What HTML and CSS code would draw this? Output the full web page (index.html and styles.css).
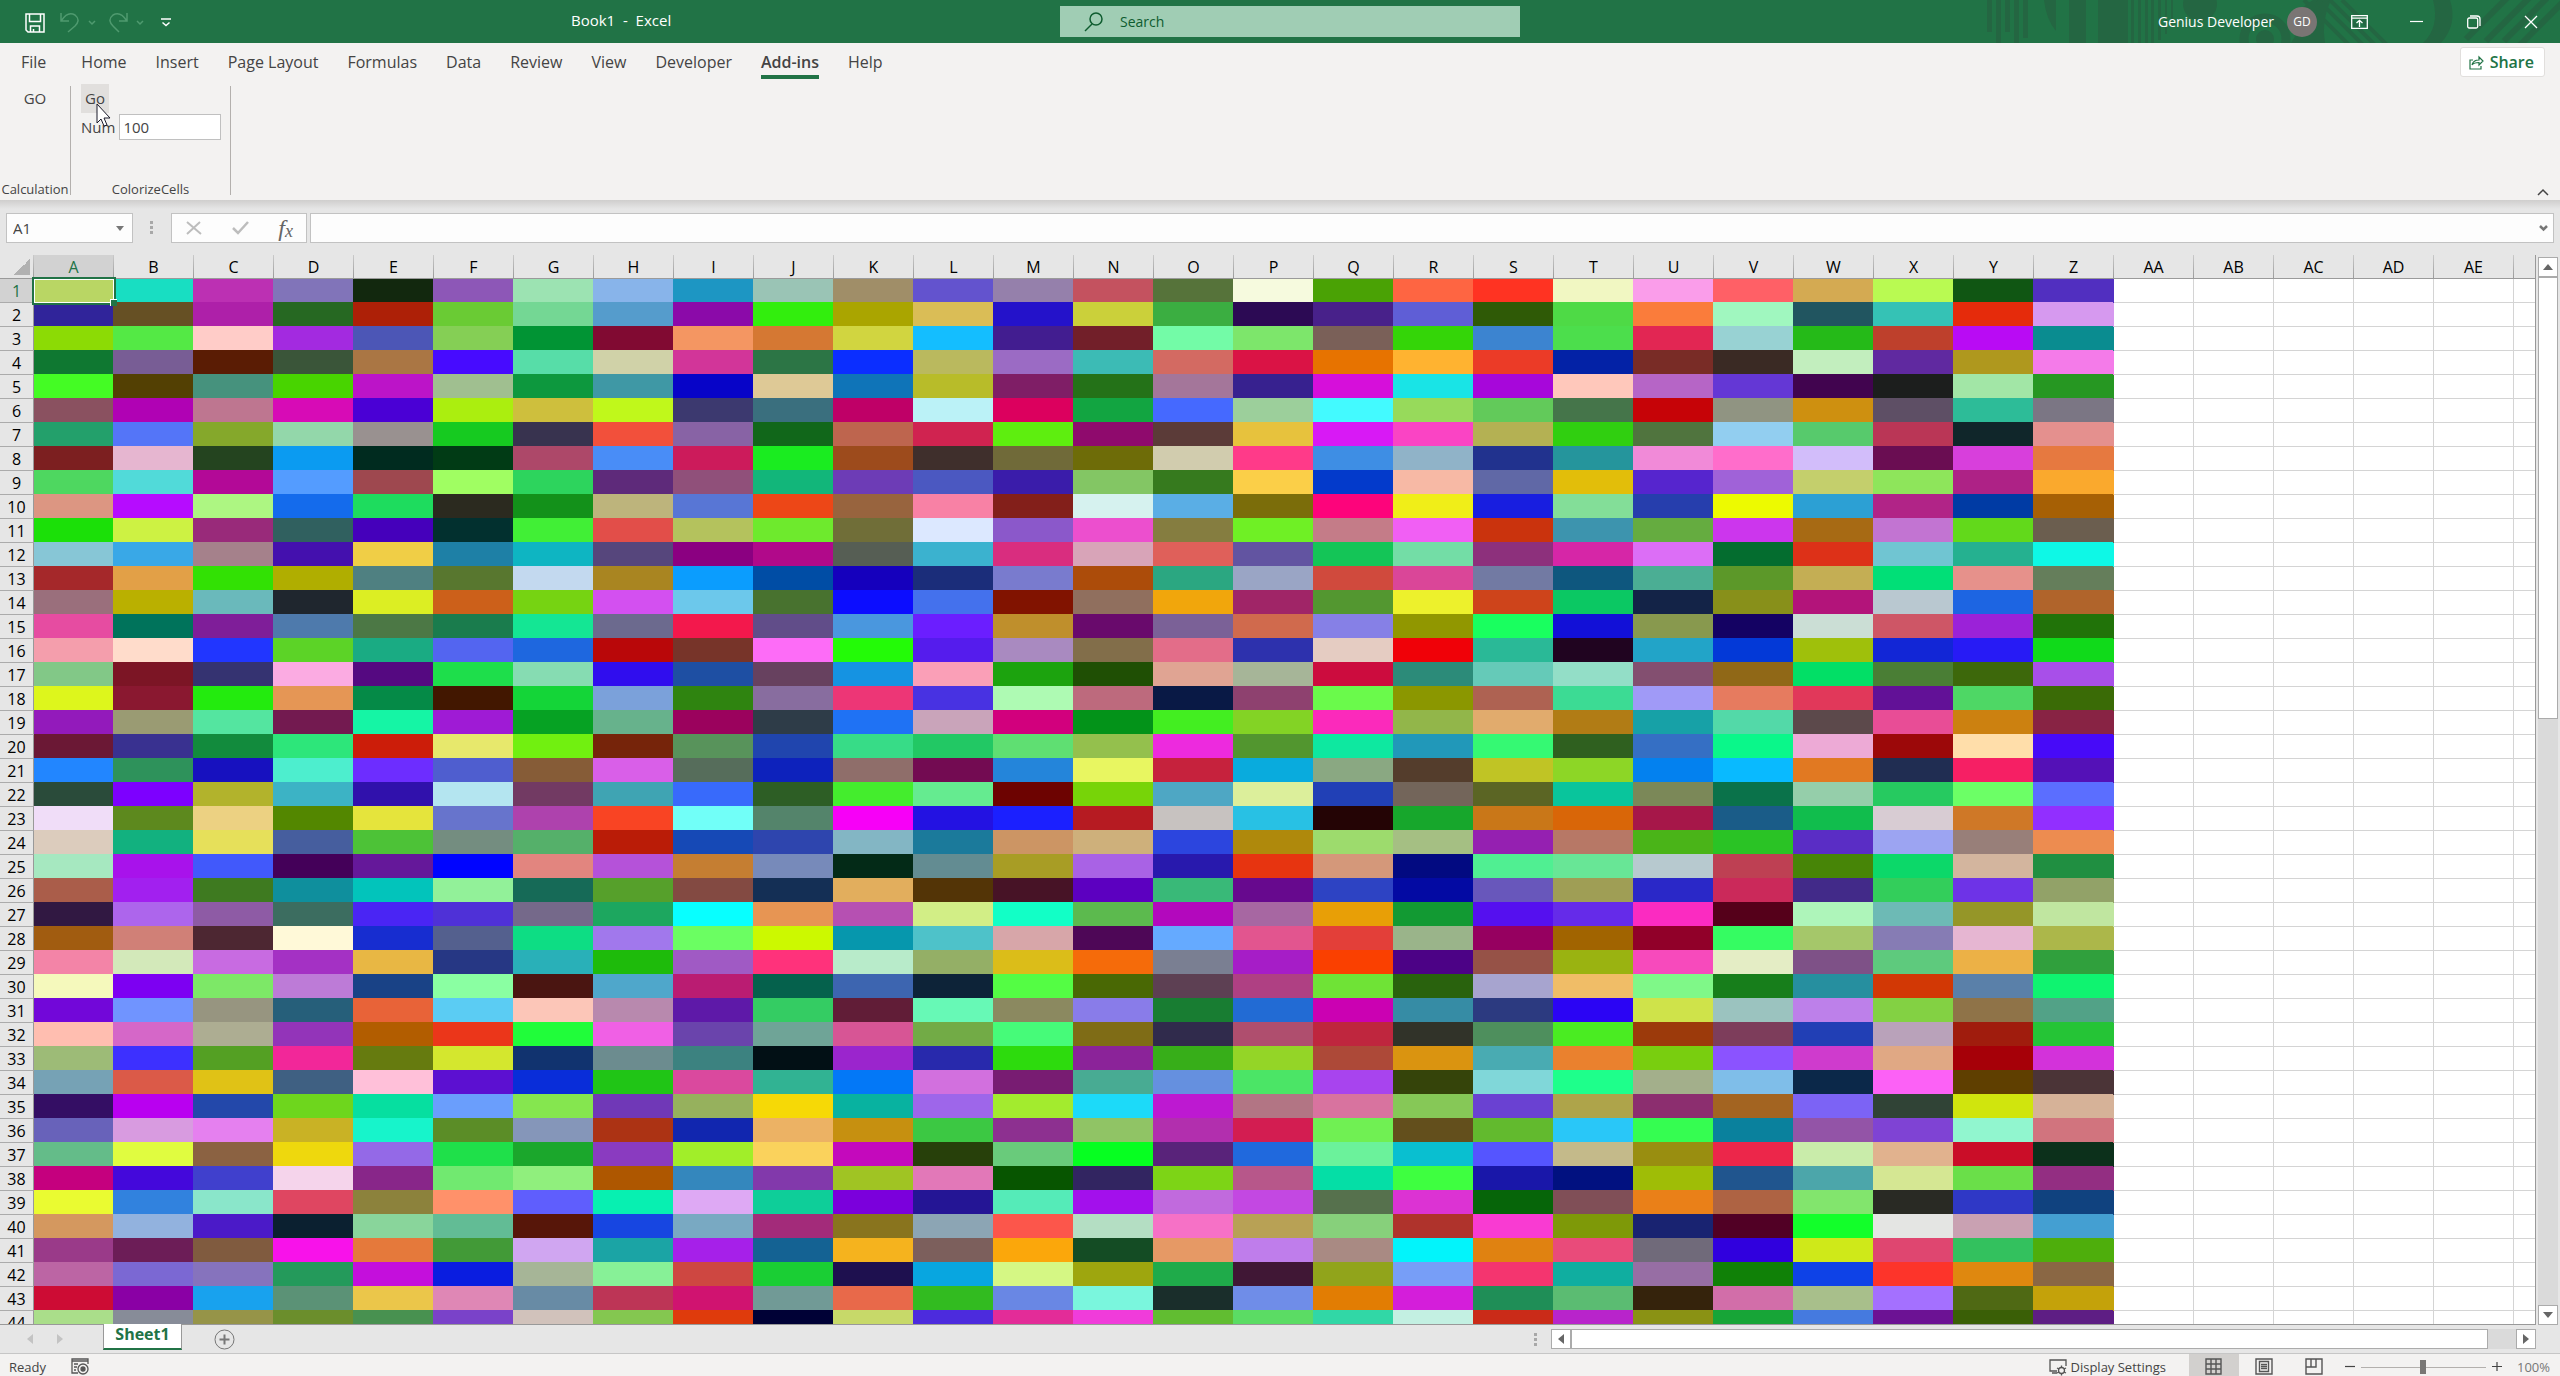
FILE: index.html
```
<!DOCTYPE html>
<html lang="en">
<head>
<meta charset="utf-8">
<title>Book1 - Excel</title>
<link rel="stylesheet" href="styles.css">
</head>
<body>
<header class="titlebar">
  <svg class="titlebar-art" width="573" height="43" viewBox="1987 0 573 43" aria-hidden="true">
    <path d="M1987 0h5v32h-5zM1996 0h5v43h-5zM2005 0h5v32h-5zM2014 0h5v43h-5zM2023 0h5v38h-5zM2044 0h12v31q-10-12-12-31zM2069 0h17v43h-17zM2098 0h30v43h-30zM2131 0h3v43h-3zM2138 0h3v43h-3zM2145 0h3v43h-3zM2151 0h3v43h-3zM2158 0h3v40h-3zM2165 0h2v34h-2zM2171 0h2v26h-2z"/>
    <circle cx="2200" cy="4" r="17"/>
    <circle cx="2265" cy="39" r="21" class="art-ring"/>
    <circle cx="2265" cy="39" r="9"/>
    <path d="M2291 43q10-14 6-25q4-12 16-18h18q-10 20-6 43z"/>
    <path class="art-line" d="M2318 0l46 46M2330 0l46 46M2342 0l46 46M2304 0l46 46"/>
    <path d="M2433 0h17q8 24-9 43h-18q17-16 10-43z"/>
    <path class="art-band" d="M2466 39l42-42M2486 41l44-44M2504 41l44-44M2520 45l50-50"/>
  </svg>
  <div class="title-left">
    <div class="quick">
      <button class="plain" aria-label="Save"><svg width="20" height="20" viewBox="0 0 20 20" fill="none" stroke="#fff" stroke-width="1.5"><path d="M1 1h18v18H3l-2-2zM4.500 1v7.500h11V1M5.500 19v-6h9v6M8.500 16v3"/></svg></button>
      <button class="plain dim undo" aria-label="Undo"><svg width="20" height="21" viewBox="0 0 20 21" fill="none" stroke="currentColor" stroke-width="1.500"><path d="M1 1v8h8M1.500 8.500C5 3 10 0 15 3c5 4 3 8 0 11l-7 6"/></svg></button>
      <button class="plain dim" aria-label="Undo list"><svg width="8" height="6" viewBox="0 0 8 6" fill="none" stroke="currentColor" stroke-width="1.500"><path d="M1 1l3 3 3-3"/></svg></button>
      <button class="plain dim redo" aria-label="Redo"><svg width="20" height="21" viewBox="0 0 20 21" fill="none" stroke="currentColor" stroke-width="1.500"><path d="M19 1v8h-8M18.500 8.500C15 3 10 0 5 3c-5 4-3 8 0 11l6 6"/></svg></button>
      <button class="plain dim" aria-label="Redo list"><svg width="8" height="6" viewBox="0 0 8 6" fill="none" stroke="currentColor" stroke-width="1.500"><path d="M1 1l3 3 3-3"/></svg></button>
      <button class="plain customize" aria-label="Customize Quick Access Toolbar"><svg width="10" height="9" viewBox="0 0 10 9" fill="none" stroke="#fff" stroke-width="1.500"><path d="M0 1h10M1.500 4.500L5 7.500l3.500-3"/></svg></button>
    </div>
    <div class="doc-title">Book1&nbsp; -&nbsp; Excel</div>
  </div>
  <label class="search">
    <svg width="20" height="20" viewBox="0 0 20 20" fill="none" stroke="#0e5c2f" stroke-width="1.500"><circle cx="12" cy="7" r="6"/><path d="M8 12l-7 7"/></svg>
    <input type="text" placeholder="Search" aria-label="Search">
  </label>
  <div class="account">
    <span>Genius Developer</span>
    <span class="avatar">GD</span>
    <button class="plain win" aria-label="Ribbon display options"><svg width="17" height="14" viewBox="0 0 17 14" fill="none" stroke="#fff" stroke-width="1.300"><path d="M.7.700h15.600v12.600H.7zM.7 3.200h15.600M8.500 12V5.500M5.500 8l3-2.700 3 2.700"/></svg></button>
    <button class="plain win" aria-label="Minimize"><svg width="13" height="14" viewBox="0 0 13 14" stroke="#fff" stroke-width="1.200"><path d="M0 6.500h13"/></svg></button>
    <button class="plain win" aria-label="Restore"><svg width="14" height="14" viewBox="0 0 14 14" fill="none" stroke="#fff" stroke-width="1.300"><rect x=".7" y="3" width="10" height="10" rx="1.500"/><path d="M3 1h7q3 0 3 3v7"/></svg></button>
    <button class="plain win" aria-label="Close"><svg width="14" height="14" viewBox="0 0 14 14" stroke="#fff" stroke-width="1.300"><path d="M1 1l12 12M13 1L1 13"/></svg></button>
  </div>
</header>

<section class="ribbon">
  <nav class="tabs">
    <button class="tab file">File</button>
    <button class="tab">Home</button>
    <button class="tab">Insert</button>
    <button class="tab">Page Layout</button>
    <button class="tab">Formulas</button>
    <button class="tab">Data</button>
    <button class="tab">Review</button>
    <button class="tab">View</button>
    <button class="tab">Developer</button>
    <button class="tab active">Add-ins</button>
    <button class="tab">Help</button>
    <button class="share"><svg width="15" height="15" viewBox="0 0 15 15" fill="none" stroke="#217346" stroke-width="1.200"><path d="M4 5H1v9h11v-3M3 10c1-4 4-5 7-5V2l4 4-4 4V7.500c-3 0-5 0-7 2.500"/></svg>Share</button>
  </nav>
  <div class="groups">
    <div class="group">
      <button class="cmd">GO</button>
      <div class="group-name">Calculation</div>
    </div>
    <div class="group colorize">
      <button class="cmd hover">Go
        <svg class="cursor" width="16" height="24" viewBox="0 0 16 24" aria-hidden="true"><path d="M1 1v19l4-4 3 7 3-1-3-7h6z" fill="#fff" stroke="#1a1a2a"/></svg>
      </button>
      <label class="field">Num <input type="text" value="100"></label>
      <div class="group-name">ColorizeCells</div>
    </div>
    <button class="plain collapse" aria-label="Collapse the ribbon"><svg width="12" height="8" viewBox="0 0 12 8" fill="none" stroke="#444" stroke-width="1.500"><path d="M1 7l5-5 5 5"/></svg></button>
  </div>
</section>

<section class="formula-bar">
  <div class="box name-box">
    <input type="text" value="A1" aria-label="Name box">
    <button class="plain" aria-label="Names"><svg width="8" height="5" viewBox="0 0 8 5"><path d="M0 0h8L4 5z" fill="#777"/></svg></button>
  </div>
  <svg class="grip" width="4" height="14" viewBox="0 0 4 14" fill="#a8a8a8"><path d="M0 0h3v3H0zM0 5h3v3H0zM0 10h3v3H0z"/></svg>
  <div class="box fx-box">
    <button class="plain" aria-label="Cancel"><svg width="16" height="14" viewBox="0 0 16 14" fill="none" stroke="#bdbdbd" stroke-width="2"><path d="M1 1l14 12M14 1L1 13"/></svg></button>
    <button class="plain" aria-label="Enter"><svg width="17" height="14" viewBox="0 0 17 14" fill="none" stroke="#bdbdbd" stroke-width="2.500"><path d="M1 7l5 5L16 1"/></svg></button>
    <button class="plain fx" aria-label="Insert function"><i>f</i><i class="fx-x">x</i></button>
  </div>
  <div class="box formula">
    <input type="text" aria-label="Formula">
    <button class="plain" aria-label="Expand formula bar"><svg width="9" height="7" viewBox="0 0 9 7" fill="none" stroke="#777" stroke-width="2.500"><path d="M1 1l3.500 3.500L8 1"/></svg></button>
  </div>
</section>

<main class="sheet">
  <div class="grid"><table class="cells" id="cells"></table></div>
  <div class="vscroll">
    <button class="arrow" aria-label="Scroll up"><svg width="10" height="6" viewBox="0 0 10 6"><path d="M5 0l5 6H0z" fill="#666"/></svg></button>
    <div class="vtrack"><div class="vthumb"></div></div>
    <button class="arrow" aria-label="Scroll down"><svg width="10" height="6" viewBox="0 0 10 6"><path d="M0 0h10L5 6z" fill="#666"/></svg></button>
  </div>
</main>

<section class="sheet-tabs">
  <button class="plain nav" aria-label="Previous sheet"><svg width="6" height="10" viewBox="0 0 6 10"><path d="M6 0v10L0 5z" fill="#c3c3c3"/></svg></button>
  <button class="plain nav" aria-label="Next sheet"><svg width="6" height="10" viewBox="0 0 6 10"><path d="M0 0v10l6-5z" fill="#c3c3c3"/></svg></button>
  <button class="sheet-tab">Sheet1</button>
  <button class="plain add" aria-label="New sheet"><svg width="21" height="21" viewBox="0 0 21 21" fill="none" stroke="#777"><circle cx="10.500" cy="10.500" r="9.500"/><path d="M10.500 5.500v10M5.500 10.500h10" stroke-width="2"/></svg></button>
  <svg class="grip tab-grip" width="4" height="14" viewBox="0 0 4 14" fill="#a8a8a8"><path d="M0 0h3v3H0zM0 5h3v3H0zM0 10h3v3H0z"/></svg>
  <div class="hscroll">
    <button class="arrow" aria-label="Scroll left"><svg width="6" height="10" viewBox="0 0 6 10"><path d="M6 0v10L0 5z" fill="#666"/></svg></button>
    <div class="htrack"><div class="hthumb"></div></div>
    <button class="arrow" aria-label="Scroll right"><svg width="6" height="10" viewBox="0 0 6 10"><path d="M0 0v10l6-5z" fill="#666"/></svg></button>
  </div>
</section>

<footer class="status">
  <span>Ready</span>
  <button class="plain macro" aria-label="Record macro"><svg width="18" height="17" viewBox="0 0 18 17" fill="none" stroke="#555" stroke-width="1.300"><path d="M7 15H1V1h16v5M1 3h16M3 6h4M3 9h3M3 12h2"/><circle cx="12" cy="11" r="5"/><circle cx="12" cy="11" r="2" fill="#555"/></svg></button>
  <button class="plain display"><svg width="18" height="17" viewBox="0 0 18 17" fill="none" stroke="#555" stroke-width="1.300"><path d="M8 12H1V1h16v6M3 14h5"/><circle cx="12.500" cy="11.500" r="3"/><path d="M12.500 6.500v2M12.500 14.500v2M8 9l2 1M15 13l2 1M8 14l2-1M15 10l2-1"/></svg>Display Settings</button>
  <button class="plain view on" aria-label="Normal"><svg width="17" height="17" viewBox="0 0 17 17" fill="none" stroke="#555" stroke-width="1.400"><path d="M1 1h15v15H1zM6 1v15M11 1v15M1 6h15M1 11h15"/></svg></button>
  <button class="plain view" aria-label="Page layout"><svg width="18" height="17" viewBox="0 0 18 17" fill="none" stroke="#555" stroke-width="1.400"><path d="M1 1h16v15H1zM4.500 3.500h9v10h-9zM6 6.500h6M6 8.500h6M6 10.500h6"/></svg></button>
  <button class="plain view" aria-label="Page break preview"><svg width="18" height="17" viewBox="0 0 18 17" fill="none" stroke="#555" stroke-width="1.400"><path d="M1 1h16v15H1zM6 1v8M1 9h10V1"/></svg></button>
  <button class="plain zoom-btn" aria-label="Zoom out"><svg width="10" height="10" viewBox="0 0 10 10" stroke="#444" stroke-width="1.200"><path d="M0 4.500h10"/></svg></button>
  <input class="zoom" type="range" min="0" max="100" value="50" aria-label="Zoom">
  <button class="plain zoom-btn" aria-label="Zoom in"><svg width="10" height="10" viewBox="0 0 10 10" stroke="#444" stroke-width="1.200"><path d="M0 4.500h10M5 0v9"/></svg></button>
  <button class="plain percent">100%</button>
</footer>
<script src="app.js"></script>
</body>
</html>
```
FILE: styles.css
```
* { box-sizing: border-box; }
html, body { height: 100%; }
body {
  margin: 0;
  display: flex;
  flex-direction: column;
  overflow: hidden;
  background: #e6e6e6;
  color: #444;
  font: 15px/20px "Open Sans", "Noto Sans", sans-serif;
}
button, input { font: inherit; color: inherit; margin: 0; }
input { border: 0; outline: 0; background: none; min-width: 0; padding: 0; }
.plain {
  display: flex;
  align-items: center;
  justify-content: center;
  border: 0;
  background: none;
  padding: 0;
}
svg { display: block; flex: none; }

/* Title bar */
.titlebar {
  position: relative;
  display: grid;
  grid-template-columns: 1fr 460px 1fr;
  align-items: center;
  height: 43px;
  flex: none;
  padding-left: 20px;
  background: #217346;
  color: #fff;
}
.titlebar-art { position: absolute; right: 0; top: 0; fill: #246642; }
.titlebar-art .art-ring { fill: none; stroke: #246642; stroke-width: 9; }
.titlebar-art .art-line { fill: none; stroke: #246642; stroke-width: 4; }
.titlebar-art .art-band { fill: none; stroke: #246642; stroke-width: 6; }
.title-left { display: flex; align-items: center; }
.quick { display: flex; align-items: center; width: 551px; padding: 2px 0 0 5px; }
.dim { color: #4f9a6f; }
.undo { margin: 0 8px 0 15px; }
.redo { margin: 0 8px 0 12px; }
.customize { margin-left: 17px; }
.doc-title { padding-bottom: 4px; white-space: nowrap; }
.search {
  display: flex;
  align-items: center;
  gap: 16px;
  height: 31px;
  padding-left: 24px;
  background: #a0cdb4;
  font-size: 14px;
}
.search input { flex: 1; }
.search input::placeholder { color: #0e5c2f; opacity: 1; }
.account {
  position: relative;
  display: flex;
  align-items: center;
  justify-content: flex-end;
  padding-right: 1px;
  font-size: 14px;
}
.avatar {
  width: 30px;
  height: 30px;
  margin: 0 14px 0 13px;
  border-radius: 50%;
  background: #7a7574;
  font-size: 12px;
  line-height: 30px;
  text-align: center;
}
.win { width: 57px; height: 40px; }

/* Ribbon */
.ribbon { flex: none; background: #f3f2f1; }
.tabs { display: flex; gap: 1px; padding: 0 15px 0 7px; height: 41px; }
.tab {
  position: relative;
  height: 38px;
  padding: 0 14px;
  border: 0;
  background: none;
  font-size: 16px;
  line-height: 38px;
}
.file { margin-right: 6px; }
.tab.active { font-weight: 600; }
.tab.active::after {
  content: "";
  position: absolute;
  left: 14px;
  right: 14px;
  bottom: 2px;
  height: 4px;
  background: #217346;
}
.share {
  display: flex;
  align-items: center;
  gap: 6px;
  height: 30px;
  margin: 4px 0 0 auto;
  padding: 0 10px 0 8px;
  border: 1px solid #e1dfdd;
  border-radius: 3px;
  background: #fff;
  color: #217346;
  font-size: 16px;
  font-weight: 600;
}
.groups { display: flex; height: 116px; }
.group {
  display: flex;
  flex-direction: column;
  align-items: center;
  width: 71px;
  height: 109px;
  margin-top: 2px;
  border-right: 1px solid #b3b0ad;
}
.colorize { width: 160px; align-items: flex-start; padding-left: 10px; }
.cmd {
  height: 29px;
  margin-top: -2px;
  padding: 0 4px;
  border: 0;
  background: none;
  line-height: 29px;
}
.cmd.hover { position: relative; background: #e1dfdd; }
.cursor { position: absolute; left: 15px; top: 19px; z-index: 2; }
.field { display: flex; align-items: center; gap: 4px; padding-top: 1px; }
.field input {
  width: 102px;
  height: 26px;
  padding: 0 3px;
  border: 1px solid #c0c0c0;
  background: #fff;
}
.group-name {
  align-self: center;
  margin-top: auto;
  font-size: 13px;
  line-height: 12px;
  white-space: nowrap;
}
.colorize .group-name { padding-right: 10px; }
.collapse { align-self: flex-end; margin: 0 11px 4px auto; }

/* Formula bar */
.formula-bar {
  display: flex;
  align-items: center;
  flex: none;
  height: 55px;
  padding: 13px 6px 12px;
  background: linear-gradient(#cfcecd, #e6e6e6 9px);
}
.box { display: flex; height: 30px; border: 1px solid #c2c2c2; background: #fdfdfd; }
.name-box { width: 127px; padding: 0 8px 0 6px; }
.name-box input { flex: 1; }
.grip { margin: 0 17px; }
.fx-box { width: 136px; margin-right: 3px; padding: 0 13px 0 14px; justify-content: space-between; }
.fx { font: 24px/28px "Liberation Serif", serif; color: #666; }
.fx-x { font-size: 18px; padding-top: 6px; }
.formula { flex: 1; padding: 0 5px; }
.formula input { flex: 1; }

/* Sheet */
.sheet { display: flex; flex: 1; min-height: 0; }
.grid {
  flex: 1;
  min-width: 0;
  overflow: hidden;
  border-right: 1px solid #999;
  border-bottom: 1px solid #999;
}
.cells {
  table-layout: fixed;
  width: 2594px;
  border-collapse: separate;
  border-spacing: 0;
  color: #000;
  font-size: 16px;
}
.cells th, .cells td { width: 80px; height: 24px; padding: 0; }
.cells th {
  position: sticky;
  background: #e6e6e6;
  font-weight: 400;
  line-height: 22px;
}
.cells thead th {
  top: 0;
  z-index: 2;
  border-bottom: 1px solid #999;
  border-right: 1px solid;
  border-image: linear-gradient(#ccc, #999) 1;
}
.cells tbody th {
  left: 0;
  z-index: 1;
  border-right: 1px solid #999;
  border-bottom: 1px solid #ababab;
}
.cells .corner { width: 34px; background: linear-gradient(135deg, #e6e6e6 50%, #b1b1b1 50%) 14px 4px / 16px 16px no-repeat #e6e6e6; }
.cells .current { background: #d2d2d2; color: #217346; }
.cells td { background: #fff; border-right: 1px solid #d4d4d4; border-bottom: 1px solid #d4d4d4; }
.cells td.fill { border: 0; background: var(--fill); box-shadow: -1px -1px 0 var(--fill); }
.cells td.selected { position: relative; z-index: 3; }
.selection {
  position: absolute;
  inset: -2px;
  border: 2px solid #217346;
  box-shadow: inset 0 0 0 1px #fff;
}
.selection::after {
  content: "";
  position: absolute;
  right: -3px;
  bottom: -3px;
  width: 6px;
  height: 6px;
  border: solid #fff;
  border-width: 1px 0 0 1px;
  background: #217346;
}
.arrow {
  display: flex;
  align-items: center;
  justify-content: center;
  width: 20px;
  height: 20px;
  padding: 0;
  border: 1px solid #ababab;
  background: #fff;
  flex: none;
}
.vscroll { display: flex; flex-direction: column; width: 24px; padding: 2px 2px 0; }
.vtrack { flex: 1; width: 20px; background: #dadada; }
.vthumb { height: 43%; border: 1px solid #ababab; background: #fff; }

/* Sheet tabs */
.sheet-tabs { display: flex; flex: none; height: 29px; padding-right: 24px; border-bottom: 1px solid #c6c6c6; }
.nav { width: 30px; }
.nav:first-child { margin-left: 15px; }
.sheet-tab {
  width: 79px;
  height: 26px;
  margin: -1px 32px 0 28px;
  padding: 0 0 4px;
  border: 1px solid #999;
  border-width: 0 1px 2px;
  border-bottom-color: #217346;
  background: #fff;
  color: #217346;
  font-weight: 700;
  font-size: 16px;
  line-height: 20px;
}
.tab-grip { margin: 8px 13px 0 auto; }
.hscroll { display: flex; width: 985px; max-width: 60%; padding-top: 4px; }
.htrack { flex: 1; height: 20px; background: #dadada; }
.hthumb { width: 97%; height: 20px; border: 1px solid #ababab; background: #fff; }

/* Status bar */
.status {
  display: flex;
  flex: none;
  height: 22px;
  padding: 0 10px 0 9px;
  background: #f3f2f1;
  font-size: 13px;
  line-height: 26px;
}
.macro { margin-left: 25px; padding-top: 3px; }
.display { margin: 0 23px 0 auto; gap: 3px; padding-top: 4px; white-space: nowrap; }
.view { width: 50px; padding-top: 3px; }
.view.on { background: #d2d0ce; }
.zoom-btn { width: 22px; padding-top: 4px; }
.zoom { width: 125px; height: 18px; margin-top: 4px; appearance: none; background: linear-gradient(#b3b0ad, #b3b0ad) 0 9px / 100% 1px no-repeat; }
.zoom::-webkit-slider-thumb { appearance: none; width: 6px; height: 14px; background: #797775; }
.percent { margin-left: 9px; padding-top: 4px; color: #777; }
```
FILE: app.js
```
// Fill colours of A1:Z44, one line per row.
const FILLS = `
b9d664 18dec2 bc30b3 8174b9 12280e 8d57b7 9ce3b2 88b4ea 1d96c3 9ac4b5 a08e68 6353ce 9580ab c4525f 56733a f6fade 4aa205 fe6542 ff3322 f1f7c2 fa9dea ff6066 d4aa52 b9fa52 105613 512fc0
30249a 665024 ae20a9 266822 ad2007 6acb34 74d794 559ccc 8b0aa9 32ee0d aaa500 dabd56 2412ca cbd03a 3bae41 2c0a54 48218a 5f5ed6 2f5a06 4eda46 fa7c3b a0f7bf 215560 35c2b5 e52b0b d699ef
8cdb05 54e945 ffccc8 a32ae0 4c56b6 85cf55 019434 810a32 f49662 d57833 d1d540 14beff 421d90 721f29 73fba7 7de66b 7a6058 34d508 3c84d0 4cde4c e22653 98d2d3 25ba18 be402c b90bf4 0a8c90
0f7831 785d95 5a1c04 3a5539 aa7644 470bff 57dda8 d0d2a8 d23599 2c7545 0b2eff bab95e 9b6bc4 3cbbb5 d36a62 da1345 e77300 ffb330 eb3b27 0322a6 792c26 3a2a24 c2eebe 6029a0 af981e f47be9
44fc24 534003 46927d 48d400 bc14c8 a0bf90 0d983e 3f98a5 0704c8 dec996 0f74b8 b8bc29 7f1e66 247218 a4769a 37218f d60fda 19e4e6 a707da ffc8bb b665c6 6437d5 41044f 1c1e1d a2e6a6 269722
8a5160 b002b4 be7690 d70bb6 4a00d5 abee0f cebf3d c0f81b 3c396f 3a6f7e bf0067 bbf2f7 dc005e 12a541 4569ff 9ccf9b 43faff 97da5b 62ca5a 45754a c60307 909482 ce9010 5e4f65 2dbc98 7b7684
23a06b 5475f8 85a82b 93d7aa 999190 16ca20 38334f f2503b 8863a5 11671a be654e d02350 5eee0f 8f0a6d 5b3b38 e7c23d d819f5 fa44c4 b4b153 30cf10 50743e 92cef0 57ca6c ba3656 10262a e4908e
7c1f20 e6b6d0 24441f 0b9bf1 002b1f 013b15 ad4869 498df7 cc1b5b 1aec20 9d4b1c 3f2f2c 706a39 6e6c08 d1ccae ff3a89 3e8ee4 90b3c8 21328e 25959c f18ad8 ff6dcb d2bdfa 6a0d52 d83fdc e67940
4ed760 51dad9 b30997 549cff 9e484f a0fe62 2dd45d 5e2a7a 90507a 12b67a 6d3cb6 4b58c1 3a1caa 83c664 367a1e fbcf48 033acb f7b9a5 6068a6 e2be0a 5625ce a062d8 c4cf6c 8ee55b ae2286 faa92d
dc9682 b60cff adf682 146bec 1edc5e 2b2a1f 13911a bdb47c 5876d5 ed4717 98643e f881a5 831f1a d6f2ef 5aaee5 7b6d0a fd047b f0ee18 181ee0 83de98 263ead edfa00 2ca0d4 b12487 003ba4 a66005
1be008 cdf243 992a7a 30605f 4500bb 02302f 41ef36 e24e49 b4c25d 6eea2d 706e38 dce8ff 8b58ca ec4fce 857d40 6ff025 c47c88 f15ff4 ca330d 3d94ae 65ac40 cc36ed a76a14 c274d2 62d91b 6b5e4f
87c6d6 39a8e7 a5818b 4410ae f0ce46 1e80a6 0eb5c2 56467c 8b0081 b1098a 565e54 3bb2cf d92d7f d8a4b8 df605a 6254a1 14c557 73dda6 8d307c d626a7 dc6ef6 046d2f dd3118 70c5d2 25b190 0ef8e6
a5282a e2a047 32e104 b0ae00 4f8081 58772f c3d9ef a98521 0b9dfe 004da5 1500bd 1b2d7a 797bce ac4c0a 2ba781 9aa5c5 d04a3d da4698 727aa3 0e577e 4bae94 5c9829 c4ae54 01df77 e6918b 657e5b
9a6f7c bab000 6ab9bb 1f262e dcee23 cc601a 76d312 d350f0 6cc8eb 48722f 0c0dff 4471ed 811300 906f5e f1a60c a02567 539730 edf12c ce441b 0bc863 132347 88901a b3147a b9c8d0 1d65e2 b0642b
e64ca1 00735b 7f1e99 4e7aac 4c7845 1a7c4d 14e694 6c6a8e f3184c 614d89 4a97de 6b1eff bf8f2c 690a6c 7b6197 d06a4d 8680e6 919700 19ff5f 1210d7 88994e 140263 cbded5 ce5666 9b22d8 217309
f49eac ffdccb 2136ff 5cd327 1aab83 5365f0 1e67df b90709 773429 fd6cf7 23fb07 551ced a98ac0 826e4a e36d89 2d31ad e5ccc2 f00108 2ab997 200420 22a4c8 0339d7 9fc00b 1226d6 271bf5 10da1a
82c887 7c1525 353371 fbabe2 550981 1ede4b 86dcb2 300dee 1e4fa3 67415f 1593e2 fa9fb7 1ca30e 1f4f04 e0a493 a6b598 cc0c3e 2c8b79 65cab8 93dec7 834f70 906817 02df66 4a7e35 3d680b a84fe9
ddf61c 8a1830 23eb0e e59655 058a47 421700 14d538 7ba1da 2f8410 886d9f ed3676 4832e2 aefab3 bd6a7d 091945 8e416f 6afa4b 8b9700 ae6252 3cdb94 a09af7 e67b5f e1385a 621197 4ed765 3a6b06
931abb 9a9b73 54e5a0 731a50 15f5a5 9f1bd5 06a223 67b28c 9b025d 2e3c48 1f72f4 c9a4ba d2007d 039319 43ee21 83d325 fb2abb 92b64a e1ab6d b17c15 17a1a7 53d9a8 5c494b e84d96 cc8110 882344
6b1835 393190 128b3d 2de67a cc1d09 e7e86c 71f010 76240a 58935b 2045ae 37dc87 22c864 5fdf72 94c04d ed2ade 52962f 0ee8a0 2198b9 35f973 2f601f 356fc4 0af78a edaad6 9c0809 ffdeaa 470af8
2286ff 2e925b 1711bf 4deece 6d2dff 4f5ecf 865c37 d95fe8 566d5b 0d22bc 8f6e6a 730b52 2485da e8f661 c6223d 09abdd 8aa882 543d2c c0c425 8dd626 0381ef 09baff e17922 202d52 f61f64 5411b7
2a4b3a 7d00ff b2b32c 3cb3c5 3011ac b4e5f0 723a63 3fa4b3 386afb 2d5e25 44ed2d 65eb90 6d0301 77d408 4ea7c4 dcef9b 2140b6 73655a 5b6524 09c59c 7b8858 0a724a 95ceaa 26ca60 6cff66 5b6eff
f0ddf8 5d891e ecd182 538700 e5e43c 6774cc ae42ad f94423 71fff8 54846b f700f7 2312e2 1b20ff b61b22 c7c2c0 28c1e4 240405 17a72c c97718 d96608 a61749 1a5c88 11bd4d d8ccd3 cf7827 922fff
dcccbd 12b17f e6e05a 465e9e 4dc237 748d80 55b06a ba1c07 1649b6 2e45ae 83b6c4 1b7a9b cc9564 ceb07b 2c45de af890c 9ddb6d a5bf83 9520b1 b77866 4ab418 2ac325 5a2dc5 9ca4f2 987f79 ed8c50
a6e8c0 a812eb 4159fb 440059 65189a 0004ff e2857f b552d9 c57e32 778aba 032a17 638c92 a89d25 a962e5 2819ad e73410 d4987a 020a81 50ef92 68e696 b7c9cf be4053 478507 0cd869 d3b59e 208f41
aa5d4a a220ef 3e7a20 0f8f9d 02c4bb 92f199 166a57 56a02b 834a42 142f55 e2ae5d 533406 471326 5c00c0 39b978 67098e 2d43c3 030aa3 6857bb 9f9e55 2a28c8 cb295a 422a89 33ce5b 6e33e7 92a268
311842 ad65ec 8e5ba5 3c6d60 4a25f4 4f31d7 75698a 1da75f 08ffff e79553 b650b2 d2ee86 12ffc6 5cba4e b308bd a767a2 e89f06 129a33 5510ef 652be9 fb2bc1 55001a aef5ba 6dbab5 959628 c0e6a0
a15c10 d08077 4d2732 fff9d8 172dd0 54608e 0ddd84 a178ec 6bfe62 ccf900 0697ad 4ec2c9 d7a6a9 4e0757 65aaff e2558f e33f39 9ab48a 960060 a16400 910029 35fc62 a5c76a 867cb4 e6b6d2 acb74a
f384a7 d3e9ba c86be1 a431c4 e8b744 263784 29b0b8 1ebb0b a05ac4 ff327b b8ebca 94af66 dbbd19 f56b0a 7a7f92 a61dc7 fa4000 4c0286 965247 9ab311 f74abc e4edc5 7e5187 5eca7d ecb146 30a03d
f5f9bc 7d00f2 7de867 bd7bd7 194286 8affa2 4a1511 4fa7cb ba1c72 05614c 3d65b0 0d2338 54fd44 496804 5d4053 af4083 6fe336 29620d a7a4cf f0bd67 7ff888 177e1b 268f9f d23805 5a80a9 0ff370
7207d9 7094ff 979580 265f7a e86338 5bccf3 fcc6b8 b889ae 5e19a8 34cc63 611d37 67f9b6 8b8960 897ce9 187d32 226bd4 cb01b2 368ca5 2c3a80 2b04f4 cfe34a 9bc3bf bd80ea 83d143 8f7348 52a287
ffbeb0 d567c8 adad92 9334b9 b25d00 eb361a 20fd3a f060e5 6a44ac 6fa497 d75595 72ab46 46fb79 7f6c16 302b4c af4e6e bf263e 313329 4e8f5d 4aec22 9c3a0b 7d3d5b 213fb5 b9a2ba a01c0d 25c436
9dbb77 3d30ff 54a023 f22799 667b0f d4e72e 11336f 6c8c8f 3c8280 021015 9b25cd 2829ac 2ddb0d 8b2399 37ae19 94d527 ad4938 da9410 49abb2 ea812e 79ce0f 8b53ff cf3bcd e0a884 a60008 d332da
76a2b5 db5a48 e0c216 3f6082 ffc0d9 5c10d1 092dd9 20c516 da499e 31b393 0378f7 d270de 781c72 48ab93 6590df 4be566 a844ee 35440a 80d7d9 1eff8b a3af8b 7fbee9 0b2849 fc61f6 5f3f00 4b3437
340e64 b900f0 2348aa 6ed61d 06dfa0 6a9efc 85e64f 7038b7 96b15d f6d906 08b2a0 9e66ea a3eb2e 1cdaf9 bd19d1 b27584 d8739f 86c857 6a41d2 aea44a 8c2e6f a36421 7c63f5 304336 d0e50d d6b298
6862ba d89be0 e580ef c9b225 17f4cb 5b8d27 8596b9 ac3314 1126af ecb264 c69010 3cc843 8d3090 90c465 b22fae d31d51 70f053 634f1c 62ba2e 29c7f8 35fd51 0a819d 9354a7 7f43d4 91f6cf d1747e
64bc89 e0fc40 8b6242 eed80d 9469e7 1fe04a 1ba72c 8a3bc0 a1ee29 fad25c c409bc 27400a 69cb7b 06ff21 59237a 2069dd 6bf29b 09bfd0 5555ff c4ba8a 998e10 ec264a c9ecaa e1b28e ca0d28 0c301b
c5007e 4408db 4040cd f5d4eb 882689 71e970 90ef7d ae5700 3487bd 8239ab a0c423 e278b8 075500 322561 7dd416 b7578a 05dea6 3eff40 1917a9 011180 9fbd06 20558e 4ca6aa d5e793 6adf49 932e82
eafb31 3182de 8ae6ca df4661 8c823c ff916a 5f5efd 07f0b1 dea9f4 0ece99 7b00dc 241595 55ebb8 a310ec c16add c348e2 56714d dc33d3 066509 804f57 ea8018 ae6343 82e56d 292a24 2f38c6 10427f
d4985f 92b2de 4b1ac8 0b2030 89d59b 62bc95 571609 1746e1 79a9c2 a32b7a 89741e 8ca5b4 fc564b b4dec3 f671c6 b8a155 87d07b af332c f93bd2 7e9908 192371 510025 12ff2a e4e5e3 c9a1b2 449fd2
9a3a89 6c1d57 805b3f f812ea e5793b 429a37 d0a6f1 1ba4a5 a620e9 146293 f5b31e 7c5f5c fba70b 144c24 e69965 bf7deb a98a83 02f4fb e08211 e94b7a 706a7a 3000de cfe919 df4670 33c15e 4eae0c
bc65a4 7b68d3 8673bd 249a5b c40fdc 0a1de0 a6b597 87f197 ce4741 1ace34 1e104f 08a6e0 d5f784 9ea60e 1fab4a 401735 91a41b 779ef7 f4356f 10aea0 976ea4 108107 0e42e7 fd342a df880f 8a6744
cd0c34 8a00a5 18a2ee 5b9276 ebc64a df87b5 688ba5 bd3556 d01370 719a96 e8694a 32bb20 6987e4 7af6dd 1a2e2b 6f8de8 e27d03 d41eda 1f8e57 5bbc72 35230c d26ea9 a8bf8b a470ff 4f6914 c4a20a
aade8a 878c98 969448 6b8e2c 489150 7a42c9 d1c2bb 84c750 df3b0c 000136 c7d969 4c2bdd e32c98 f03cda 61bd31 5bdc64 31d7a6 c3f0e2 ca2b18 b824cb 8a9214 17a537 457adf 6c1294 3a5f06 5e1e84
`.trim().split("\n").map(line => line.split(" "));

// A to AE are labelled; the last column only peeks in at the right edge.
const LABELLED = 31;
const COLUMNS = 32;

function columnName(index) {
  const letter = String.fromCharCode(65 + index % 26);
  return index < 26 ? letter : "A" + letter;
}

const table = document.getElementById("cells");
const headRow = table.createTHead().insertRow();
const corner = document.createElement("th");
corner.className = "corner";
headRow.append(corner);
for (let c = 0; c < COLUMNS; c++) {
  const th = document.createElement("th");
  th.scope = "col";
  if (c < LABELLED) th.textContent = columnName(c);
  if (c === 0) th.className = "current";
  headRow.append(th);
}

const body = table.createTBody();
FILLS.forEach((fills, r) => {
  const row = body.insertRow();
  const th = document.createElement("th");
  th.scope = "row";
  th.textContent = r + 1;
  if (r === 0) th.className = "current";
  row.append(th);
  for (let c = 0; c < COLUMNS; c++) {
    const cell = row.insertCell();
    if (fills[c]) {
      cell.className = "fill";
      cell.style.setProperty("--fill", "#" + fills[c]);
    }
  }
});

const first = body.rows[0].cells[1];
first.classList.add("selected");
const selection = document.createElement("div");
selection.className = "selection";
first.append(selection);
```
